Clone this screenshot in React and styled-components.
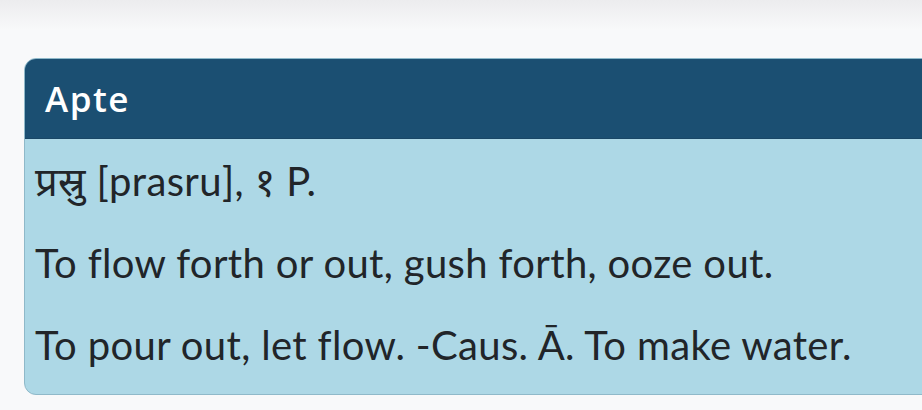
import React from 'react';
import styled, { createGlobalStyle } from 'styled-components';

const GlobalStyle = createGlobalStyle`
    html, body {
        margin: 0;
        padding: 0;
        background: #f8f9fa;
        overflow: hidden;
    }
`;

const Page = styled.div`
    width: 922px;
    height: 410px;
    background: #f8f9fa;
`;

const TopShade = styled.div`
    height: 30px;
    background: linear-gradient(to bottom, #ececee, #f8f9fa);
`;

const CardWrap = styled.div`
    padding: 28px 0 0 24px;
`;

const Card = styled.div`
    width: 940px;
    border: 1px solid #8fb9c9;
    border-radius: 12px;
    overflow: hidden;
    background: #add8e6;
`;

const CardHeader = styled.div`
    height: 79px;
    display: flex;
    align-items: center;
    padding: 0 20px;
    background: #1b4f72;
    color: #ffffff;
    font-family: 'Open Sans', sans-serif;
    font-weight: 600;
    font-size: 35px;
    letter-spacing: 1.5px;
    border-bottom: 1px solid #1a4766;
`;

const CardBody = styled.div`
    padding: 15px 10px 22px 10px;
    color: #212529;
    font-family: Lato, 'Noto Sans', sans-serif;
    font-size: 40px;
    letter-spacing: 0.35px;
`;

const Line = styled.p`
    margin: 0 0 28px 0;
    line-height: 54px;

    &:last-child {
        margin-bottom: 0;
    }
`;

const App = () => {
    return (
        <>
            <GlobalStyle />
            <Page>
                <TopShade />
                <CardWrap>
                    <Card>
                        <CardHeader>Apte</CardHeader>
                        <CardBody>
                            <Line>प्रस्रु [prasru], १ P.</Line>
                            <Line>To flow forth or out, gush forth, ooze out.</Line>
                            <Line>To pour out, let flow. -Caus. Ā. To make water.</Line>
                        </CardBody>
                    </Card>
                </CardWrap>
            </Page>
        </>
    );
};

export default App;
